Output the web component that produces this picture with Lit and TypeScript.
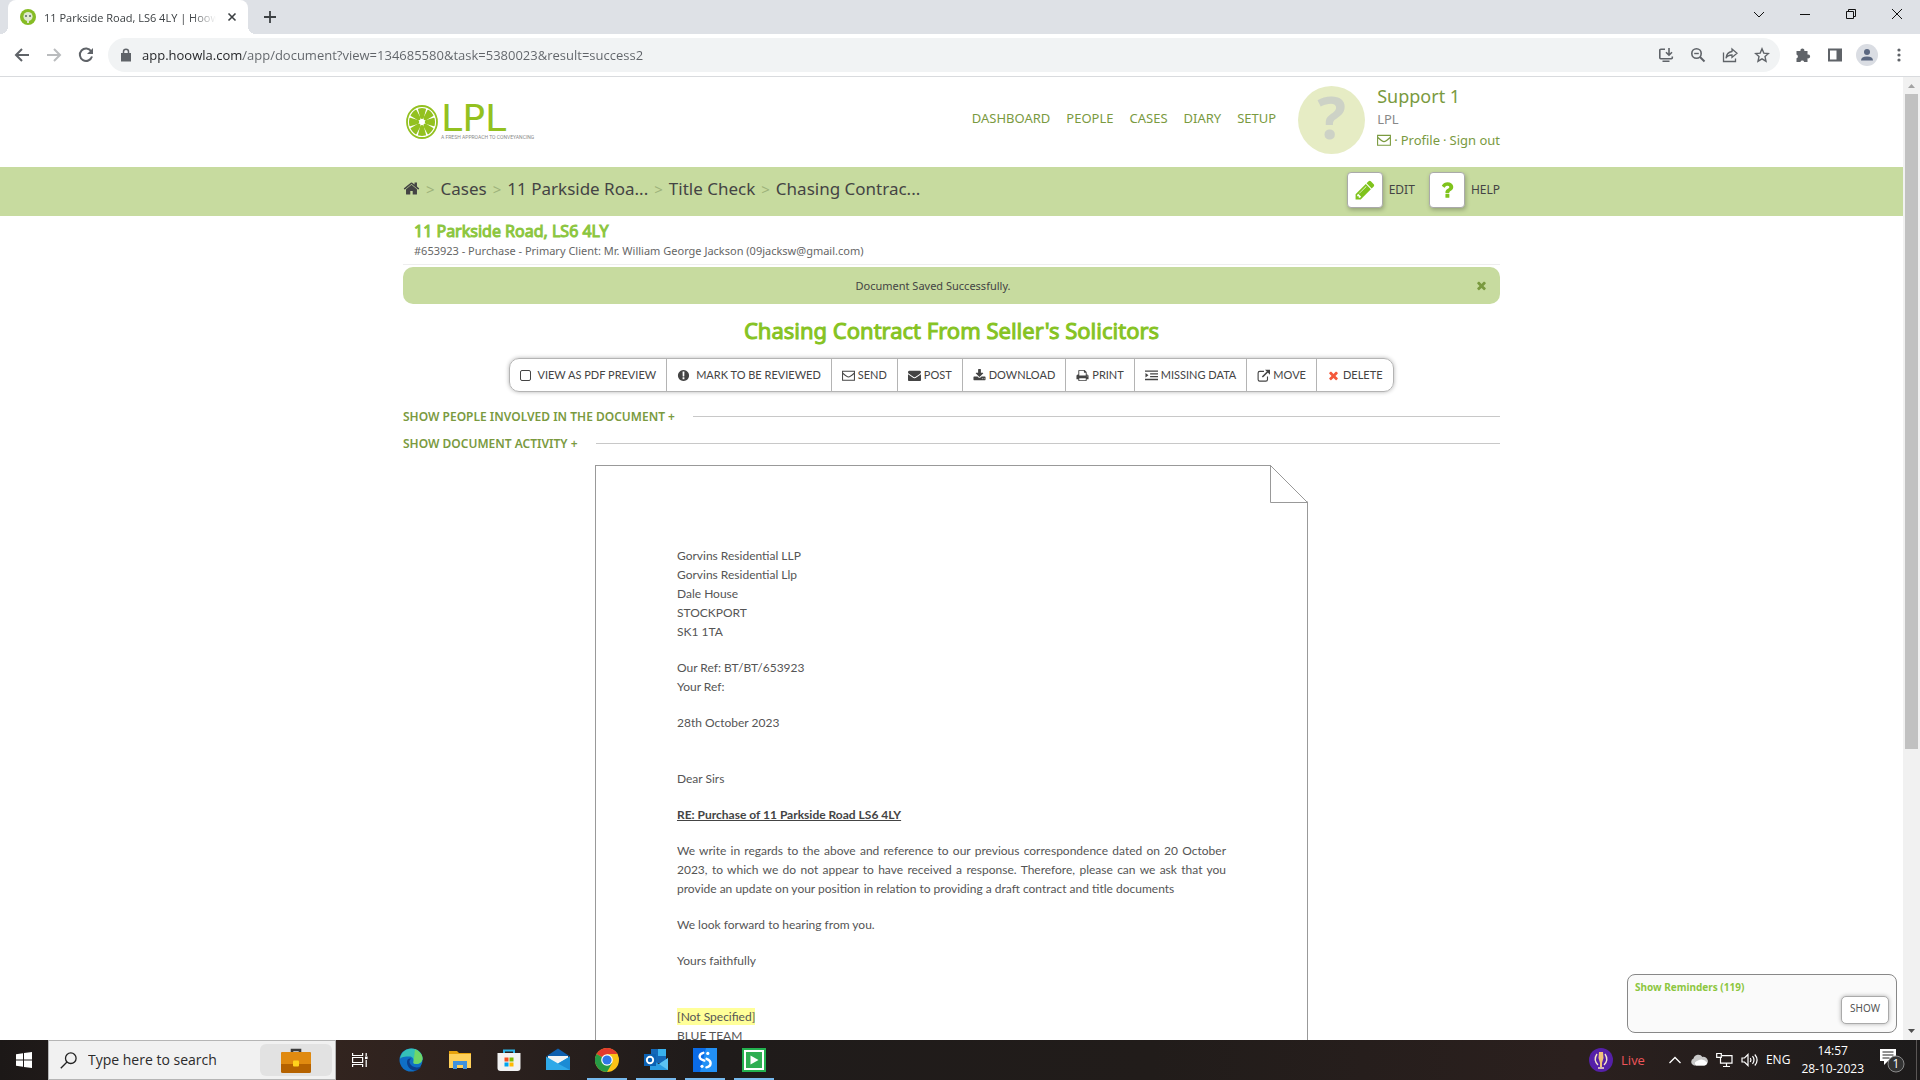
import { LitElement, html, css, svg } from "lit";
import { customElement } from "lit/decorators.js";

const FA: Record<string, string> = {
  home: "M1472 992v480q0 26-19 45t-45 19h-384v-384h-256v384h-384q-26 0-45-19t-19-45v-480q0-1 .5-3t.5-3l575-474 575 474q1 2 1 6zm223-69l-62 74q-8 9-21 11h-3q-13 0-21-7l-692-577-692 577q-12 8-24 7-13-2-21-11l-62-74q-8-10-7-23.500t11-21.500l719-599q32-26 76-26t76 26l244 204v-195q0-14 9-23t23-9h192q14 0 23 9t9 23v408l219 182q10 8 11 21.500t-7 23.500z",
  pencil:
    "M491 1536l91-91-235-235-91 91v107h128v128h107zm523-928q0-22-22-22-10 0-17 7l-542 542q-7 7-7 17 0 22 22 22 10 0 17-7l542-542q7-7 7-17zm-54-192l416 416-832 832h-416v-416zm683 96q0 53-37 90l-166 166-416-416 166-165q36-38 90-38 53 0 91 38l235 234q37 39 37 91z",
  question:
    "M1088 1256v240q0 16-12 28t-28 12h-240q-16 0-28-12t-12-28v-240q0-16 12-28t28-12h240q16 0 28 12t12 28zm316-600q0 54-15.500 101t-35 76.500-55 59.500-57.500 43.500-61 35.500q-41 23-68.500 65t-27.500 67q0 17-12 32.500t-28 15.500h-240q-15 0-25.500-18.500t-10.500-37.500v-45q0-83 65-156.500t143-108.500q59-27 84-56t25-76q0-42-46.500-74t-107.500-32q-65 0-108 29-35 25-107 115-13 16-31 16-12 0-25-8l-164-125q-13-10-15.500-25t5.500-28q160-266 464-266 80 0 161 31t146 83 106 127.500 41 158.500z",
  times:
    "M1490 1322q0 40-28 68l-136 136q-28 28-68 28t-68-28l-294-294-294 294q-28 28-68 28t-68-28l-136-136q-28-28-28-68t28-68l294-294-294-294q-28-28-28-68t28-68l136-136q28-28 68-28t68 28l294 294 294-294q28-28 68-28t68 28l136 136q28 28 28 68t-28 68l-294 294 294 294q28 28 28 68z",
  envelope:
    "M1792 710v794q0 66-47 113t-113 47h-1472q-66 0-113-47t-47-113v-794q44 49 101 87 362 246 497 345 57 42 92.500 65.500t94.500 48 110 24.500h2q51 0 110-24.500t94.500-48 92.500-65.500q170-123 498-345 57-39 100-87zm0-294q0 79-49 151t-122 123q-376 261-468 325-10 7-42.500 31t-54 38.500-52 32.500-57.500 27-50 9h-2q-23 0-50-9t-57.500-27-52-32.500-54-38.500-42.500-31q-91-64-262-182.500t-205-142.500q-62-42-117-115.500t-55-136.500q0-78 41.500-130t118.500-52h1472q65 0 112.500 47t47.500 113z",
  download:
    "M1344 1344q0-26-19-45t-45-19-45 19-19 45 19 45 45 19 45-19 19-45zm256 0q0-26-19-45t-45-19-45 19-19 45 19 45 45 19 45-19 19-45zm128-224v320q0 40-28 68t-68 28h-1472q-40 0-68-28t-28-68v-320q0-40 28-68t68-28h465l135 136q58 56 136 56t136-56l136-136h464q40 0 68 28t28 68zm-325-569q17 41-14 70l-448 448q-18 19-45 19t-45-19l-448-448q-31-29-14-70 17-39 59-39h256v-448q0-26 19-45t45-19h256q26 0 45 19t19 45v448h256q42 0 59 39z",
  print:
    "M448 1536h896v-256h-896v256zm0-640h896v-384h-160q-40 0-68-28t-28-68v-160h-640v640zm1152 64q0-26-19-45t-45-19-45 19-19 45 19 45 45 19 45-19 19-45zm128 0v416q0 13-9.500 22.500t-22.500 9.500h-224v160q0 40-28 68t-68 28h-960q-40 0-68-28t-28-68v-160h-224q-13 0-22.500-9.500t-9.500-22.500v-416q0-79 56.500-135.500t135.500-56.500h64v-544q0-40 28-68t68-28h672q40 0 88 20t76 48l152 152q28 28 48 76t20 88v256h64q79 0 135.500 56.500t56.500 135.500z",
  alert:
    "M896 128a768 768 0 1 0 .1 0zM800 352h192q32 0 31 32l-18 624q-1 30-32 30h-156q-30 0-31-30l-18-624q-1-32 32-32zm0 800h190q32 0 32 32v190q0 32-32 32h-190q-32 0-32-32v-190q0-32 32-32z",
  indent:
    "M0 192h1792v192H0zM704 576h1088v192H704zM704 960h1088v192H704zM0 1344h1792v192H0zM64 544l416 320-416 320z",
};

const fa = (name: string, cls = "") =>
  html`<svg class="fa ${cls}" viewBox="0 0 1792 1792" aria-hidden="true"><path fill-rule="evenodd" d=${FA[name]}></path></svg>`;

const mailOutline = html`<svg class="fa" viewBox="0 0 14 14" aria-hidden="true">
  <path d="M.6 2.400h12.800v9.800H.6zM.6 4.200C3 6.500 5 8.600 7 8.600s4-2.100 6.400-4.400" fill="none" stroke="currentColor" stroke-width="1.100"></path>
</svg>`;

const moveOut = html`<svg class="fa" viewBox="0 0 14 14" aria-hidden="true">
  <path d="M7.500 2.500H3A1.800 1.800 0 0 0 1.200 4.300v6.900A1.800 1.800 0 0 0 3 13h6.500a1.800 1.800 0 0 0 1.800-1.800V8" fill="none" stroke="currentColor" stroke-width="1.200"></path>
  <path d="M5.800 8.600L12 2.400" stroke="currentColor" stroke-width="1.800"></path>
  <path d="M8.600.8H14v5.400z"></path>
</svg>`;

const citrus = html`<svg class="citrus" viewBox="0 0 32 34" aria-hidden="true">
  <ellipse cx="16" cy="17" rx="15" ry="16" fill="none" stroke="#93c120" stroke-width="1.800"></ellipse>
  ${[0, 45, 90, 135, 180, 225, 270, 315].map(
    (a) => svg`<path transform="translate(16 17) scale(1 1.070) rotate(${a})" fill="#93c120" d="M1.800 -4L4 -11.800Q4 -12.600 3 -12.700Q0 -13.400 -3 -12.700Q-4 -12.600 -4 -11.800L-1.800 -4Q0 -1.500 1.800 -4z"></path>`
  )}
</svg>`;

@customElement("chrome-frame")
class ChromeFrame extends LitElement {
  static styles = css`
    :host { display: block; font-family: "Open Sans", "Noto Sans", sans-serif; color: #3c4043; }
    button { border: 0; padding: 0; background: none; color: inherit; display: grid; place-items: center; }
    svg { display: block; fill: none; stroke: #5f6368; stroke-width: 2; }
    .tabs { display: flex; height: 34px; background: #dee1e6; padding-left: 8px; }
    .tab { position: relative; display: flex; align-items: center; width: 240px; box-sizing: border-box; padding: 0 8px 0 12px; background: #fff; border-radius: 8px 8px 0 0; font-size: 12px; }
    .tab::before, .tab::after { content: ""; position: absolute; bottom: 0; width: 8px; height: 8px; }
    .tab::before { left: -8px; background: radial-gradient(circle at 0 0, #dee1e6 8px, #fff 8px); }
    .tab::after { right: -8px; background: radial-gradient(circle at 100% 0, #dee1e6 8px, #fff 8px); }
    .favicon { stroke: none; }
    .title { flex: 1; margin-left: 8px; white-space: nowrap; overflow: hidden; font-size: 11px; -webkit-mask: linear-gradient(to left, transparent, #000 24px); mask: linear-gradient(to left, transparent, #000 24px); }
    .close { width: 16px; height: 16px; margin-left: 8px; }
    .plus { width: 28px; margin-left: 8px; }
    .win { margin-left: auto; display: flex; }
    .win button { width: 46px; height: 28px; }
    .win svg { stroke: #111; stroke-width: 1; }
    .bar { display: flex; align-items: center; height: 42px; padding: 0 5px 0 6px; border-bottom: 1px solid #d9dbde; }
    .nav { display: flex; }
    .nav button { width: 32px; height: 32px; }
    .omni { flex: 1; display: flex; align-items: center; height: 34px; margin: 0 7px 0 6px; padding: 0 2px 0 12px; border-radius: 17px; background: #f1f3f4; }
    .url { flex: 1; min-width: 0; margin-left: 10px; padding: 0; border: 0; outline: 0; font: 13px/20px "Open Sans", "Noto Sans", sans-serif; color: transparent; background: linear-gradient(to right, #202124 101px, #5f6368 101px); -webkit-background-clip: text; background-clip: text; }
    .omni button, .ext button { width: 32px; height: 32px; }
    .ext { display: flex; }
    .person { width: 22px; height: 22px; border-radius: 50%; background: #dadde3; display: grid; place-items: center; }
  `;
  render() {
    return html`
      <div class="tabs">
        <div class="tab">
          <svg class="favicon" width="16" height="16" viewBox="0 0 16 16"><circle cx="8" cy="8" r="8" fill="#86bc25"></circle><circle cx="8" cy="7.500" r="4.600" fill="#dfe9cf"></circle><circle cx="6" cy="7" r="1" fill="#566"></circle><circle cx="10" cy="7" r="1" fill="#566"></circle><path d="M7 11h2v3H7z" fill="#dfe9cf"></path></svg>
          <span class="title">11 Parkside Road, LS6 4LY | Hoowla</span>
          <button class="close" aria-label="Close tab"><svg width="10" height="10" viewBox="0 0 10 10"><path d="M1.500 1.500l7 7M8.500 1.500l-7 7" stroke="#3c4043" stroke-width="1.600"></path></svg></button>
        </div>
        <button class="plus" aria-label="New tab"><svg width="14" height="14" viewBox="0 0 14 14"><path d="M7 1v12M1 7h12" stroke="#3c4043" stroke-width="1.800"></path></svg></button>
        <div class="win">
          <button aria-label="Search tabs"><svg width="12" height="12" viewBox="0 0 12 12"><path d="M1 4l5 5 5-5"></path></svg></button>
          <button aria-label="Minimize"><svg width="12" height="12" viewBox="0 0 12 12"><path d="M1 6.500h10"></path></svg></button>
          <button aria-label="Restore"><svg width="12" height="12" viewBox="0 0 12 12"><path d="M1.500 3.500h7v7h-7zM3.500 3.500v-2h7v7h-2"></path></svg></button>
          <button aria-label="Close"><svg width="12" height="12" viewBox="0 0 12 12"><path d="M1 1l10 10M11 1L1 11"></path></svg></button>
        </div>
      </div>
      <div class="bar">
        <div class="nav">
          <button aria-label="Back"><svg width="16" height="16" viewBox="0 0 16 16"><path d="M15 8H2M8 2L2 8l6 6"></path></svg></button>
          <button aria-label="Forward"><svg width="16" height="16" viewBox="0 0 16 16"><path d="M1 8h13M8 2l6 6-6 6" stroke="#babcbe"></path></svg></button>
          <button aria-label="Reload"><svg width="16" height="16" viewBox="0 0 16 16"><path d="M13.200 4.200A6.200 6.200 0 1 0 14 9.500"></path><path d="M15 1v6H9z" fill="#5f6368" stroke="none"></path></svg></button>
        </div>
        <div class="omni">
          <svg width="12" height="14" viewBox="0 0 12 14"><path d="M1 5h10v8.500H1z" fill="#5f6368" stroke="none"></path><path d="M3.500 5.500V3.700a2.500 2.500 0 0 1 5 0v1.800" stroke-width="1.500"></path></svg>
          <input class="url" aria-label="Address" value="app.hoowla.com/app/document?view=134685580&amp;task=5380023&amp;result=success2" />
          <button aria-label="Install"><svg width="16" height="16" viewBox="0 0 16 16"><path d="M7 2.200H2.800a1 1 0 0 0-1 1v7.500a1 1 0 0 0 1 1h10.500a1 1 0 0 0 1-1V9.500M4.500 14.200h7" stroke-width="1.600"></path><path d="M11 1v6.500M8 5.200l3 3 3-3" stroke-width="1.600"></path></svg></button>
          <button aria-label="Zoom"><svg width="16" height="16" viewBox="0 0 16 16"><circle cx="6.500" cy="6.500" r="4.700" stroke-width="1.600"></circle><path d="M10 10l4.500 4.500" stroke-width="2"></path><path d="M4.200 6.500h4.600" stroke-width="1.400"></path></svg></button>
          <button aria-label="Share"><svg width="16" height="16" viewBox="0 0 16 16"><path d="M1.500 5.500v9h12v-3" stroke-width="1.300"></path><path d="M10 2l5 4.200-5 4.200V8C7 8 5 9 4 11.200 4.300 7.500 6.500 5 10 4.500z" stroke-width="1.300"></path></svg></button>
          <button aria-label="Bookmark"><svg width="16" height="16" viewBox="0 0 16 16"><path d="M8 1.800l1.800 4.300 4.700.4-3.500 3.100 1 4.600L8 11.800l-4 2.400 1-4.600L1.500 6.500l4.700-.4z" stroke-width="1.400"></path></svg></button>
        </div>
        <div class="ext">
          <button aria-label="Extensions"><svg width="16" height="16" viewBox="0 0 16 16"><path d="M1.500 4h4a2 2 0 1 1 3.800 0h3.200v3.500a2 2 0 1 1 0 3.800V15H9.200a2 2 0 0 0-3.800 0H1.500v-3.700a2 2 0 0 0 0-3.800z" fill="#5f6368" stroke="none"></path></svg></button>
          <button aria-label="Side panel"><svg width="16" height="16" viewBox="0 0 16 16"><path d="M2 2.500h12v11H2z"></path><path d="M9.500 2h4.500v12H9.500z" fill="#5f6368" stroke="none"></path></svg></button>
          <button aria-label="Profile"><span class="person"><svg width="14" height="14" viewBox="0 0 14 14"><circle cx="7" cy="4" r="3" fill="#5a6780" stroke="none"></circle><path d="M1 12.500q0-4 6-4t6 4z" fill="#5a6780" stroke="none"></path></svg></span></button>
          <button aria-label="Menu"><svg width="4" height="16" viewBox="0 0 4 16"><g fill="#5f6368" stroke="none"><circle cx="2" cy="3" r="1.600"></circle><circle cx="2" cy="8" r="1.600"></circle><circle cx="2" cy="13" r="1.600"></circle></g></svg></button>
        </div>
      </div>`;
  }
}

const actions = [
  { label: "MARK TO BE REVIEWED", icon: fa("alert"), wide: true },
  { label: "SEND", icon: mailOutline },
  { label: "POST", icon: fa("envelope") },
  { label: "DOWNLOAD", icon: fa("download") },
  { label: "PRINT", icon: fa("print") },
  { label: "MISSING DATA", icon: fa("indent") },
  { label: "MOVE", icon: moveOut },
  { label: "DELETE", icon: fa("times", "red") },
];

@customElement("case-page")
class CasePage extends LitElement {
  static styles = css`
    :host { display: block; font-family: "Noto Sans", "Open Sans", sans-serif; color: #444; background: #fff; }
    a { color: inherit; text-decoration: none; }
    button { font: inherit; color: inherit; background: none; border: 0; padding: 0; }
    h1, h2, h3, p { margin: 0; }
    .fa { display: block; width: 14px; height: 14px; fill: currentColor; flex: none; }
    .wrap { max-width: 1097px; margin: 0 auto; }
    .head { display: flex; align-items: center; height: 90px; }
    .logo { display: flex; align-items: center; gap: 3px; padding-left: 3px; color: #93c120; }
    .citrus { width: 32px; height: 34px; }
    .brand { display: flex; flex-direction: column; gap: 2px; }
    .name { font: 38px/28px "DejaVu Sans", sans-serif; }
    .tag { font: 5px/6px "Roboto", sans-serif; color: #8a8a8a; white-space: nowrap; }
    .menu { display: flex; gap: 16px; margin-left: auto; padding-bottom: 8px; font-size: 13px; line-height: 18px; color: #7a9a3f; }
    .avatar { box-sizing: border-box; width: 67px; height: 68px; margin: 0 12px 4px 22px; padding-bottom: 8px; border-radius: 50%; background: #e6ecc4; color: #cdd2c6; display: grid; place-items: center; font-size: 60px; line-height: 60px; font-weight: 700; }
    .user { display: grid; gap: 4px; padding-bottom: 10px; color: #7a9a3f; font-size: 13px; line-height: 18px; }
    .user .who { font-size: 18px; line-height: 22px; }
    .user .firm { color: #888; line-height: 16px; }
    .user .links { display: flex; align-items: center; gap: 3px; }
    .crumbs { background: #c7db9f; }
    .crumbs .wrap { display: flex; align-items: center; height: 49px; }
    .trail { display: flex; align-items: center; gap: 6px; font-size: 17px; line-height: 24px; padding-bottom: 6px; }
    .trail .fa { width: 17px; height: 17px; }
    .sep { color: #9db27a; font-size: 15px; }
    .tools { display: flex; gap: 14px; margin-left: auto; padding-bottom: 4px; }
    .tool { display: flex; align-items: center; gap: 6px; font-size: 12px; }
    .box { width: 34px; height: 34px; border: 1px solid #aaa; border-radius: 4px; background: #fff; box-shadow: 1px 2px 4px rgba(0, 0, 0, 0.25); display: grid; place-items: center; color: #7fc31c; }
    .box .fa { width: 22px; height: 22px; }
    .case { padding: 4px 11px; border-bottom: 1px solid #eee; }
    .case h1 { font-size: 16px; line-height: 22px; font-weight: 400; color: #8cc63f; -webkit-text-stroke: 1px #8cc63f; }
    .case p { font-size: 11px; line-height: 18px; color: #666; }
    .alert { display: flex; align-items: center; height: 37px; margin-top: 2px; padding: 0 12px; border-radius: 10px; background: #c7db9f; font-size: 11px; }
    .alert span { flex: 1; padding-right: 24px; text-align: center; }
    .alert .fa { width: 13px; height: 13px; color: #7a9a3f; }
    h2 { margin-top: 10px; text-align: center; font-size: 22px; line-height: 32px; font-weight: 400; color: #86c323; -webkit-text-stroke: 1px #86c323; }
    .actions { display: flex; width: max-content; margin: 12px auto 0; border: 1px solid #b4b4b4; border-radius: 10px; box-shadow: 0 0 4px rgba(0, 0, 0, 0.3); font: 11px/32px "Lato", sans-serif; }
    .act { display: flex; align-items: center; gap: 3px; padding: 0 10px; line-height: 32px; }
    .act.wide { gap: 6px; }
    .act + .act { border-left: 1px solid #b4b4b4; }
    .act input { appearance: none; width: 11px; height: 11px; margin: 0; border: 1px solid #444; border-radius: 2px; background: #fff; }
    .act .fa { width: 13px; height: 13px; }
    .red { color: #f4593b; }
    .reveal { display: flex; align-items: center; gap: 18px; color: #7a9a3f; font-size: 12px; line-height: 27px; font-weight: 600; }
    .reveal::after { content: ""; flex: 1; height: 1px; background: #c8c8c8; }
    .reveals { margin-top: 11px; }
    .paper { position: relative; box-sizing: border-box; width: 65%; margin: 8px auto 0; padding: 81px 81px 60px; border: 1px solid #999; border-top: 0; font: 12px/19px "Lato", sans-serif; color: #555; text-align: justify; }
    .paper::before { content: ""; position: absolute; left: 0; right: 37px; top: 0; height: 1px; background: #999; }
    .fold { position: absolute; right: -1px; top: 0; display: block; }
    .paper p + p { margin-top: 17px; }
    .paper p.far { margin-top: 37px; }
    mark { background: #ffff99; color: inherit; display: inline-block; line-height: 17px; }
    b { font-weight: 700; text-decoration: underline; color: #444; }
  `;
  render() {
    const sep = html`<span class="sep">&gt;</span>`;
    return html`
      <header class="wrap head">
        <a class="logo" href="#">${citrus}<span class="brand"><span class="name">LPL</span><span class="tag">A FRESH APPROACH TO CONVEYANCING</span></span></a>
        <nav class="menu">${["DASHBOARD", "PEOPLE", "CASES", "DIARY", "SETUP"].map((t) => html`<a href="#">${t}</a>`)}</nav>
        <span class="avatar">?</span>
        <div class="user">
          <a class="who" href="#">Support 1</a>
          <span class="firm">LPL</span>
          <span class="links"><a href="#" aria-label="Messages">${mailOutline}</a>·<a href="#">Profile</a>·<a href="#">Sign out</a></span>
        </div>
      </header>
      <div class="crumbs">
        <div class="wrap">
          <nav class="trail">
            <a href="#" aria-label="Home">${fa("home")}</a>
            ${["Cases", "11 Parkside Roa...", "Title Check", "Chasing Contrac..."].map((t) => html`${sep}<a href="#">${t}</a>`)}
          </nav>
          <div class="tools">
            <button class="tool"><span class="box">${fa("pencil")}</span>EDIT</button>
            <button class="tool"><span class="box">${fa("question")}</span>HELP</button>
          </div>
        </div>
      </div>
      <main class="wrap">
        <div class="case">
          <h1>11 Parkside Road, LS6 4LY</h1>
          <p>#653923 - Purchase - Primary Client: Mr. William George Jackson (09jacksw@gmail.com)</p>
        </div>
        <div class="alert" role="status"><span>Document Saved Successfully.</span><button aria-label="Dismiss">${fa("times")}</button></div>
        <h2>Chasing Contract From Seller's Solicitors</h2>
        <div class="actions">
          <label class="act wide"><input type="checkbox" />VIEW AS PDF PREVIEW</label>
          ${actions.map((a) => html`<button class="act ${a.wide ? "wide" : ""}">${a.icon}${a.label}</button>`)}
        </div>
        <div class="reveals">
          <div class="reveal"><button>SHOW PEOPLE INVOLVED IN THE DOCUMENT +</button></div>
          <div class="reveal"><button>SHOW DOCUMENT ACTIVITY +</button></div>
        </div>
        <article class="paper">
          <svg class="fold" width="38" height="38" viewBox="0 0 38 38"><path d="M.5 0v37.500H38M.5.500L37.500 37.500" fill="none" stroke="#999"></path><path d="M1.500 0H38v37z" fill="#fff"></path><path d="M.5.500L37.500 37.500" stroke="#999"></path></svg>
          <p>Gorvins Residential LLP<br />Gorvins Residential Llp<br />Dale House<br />STOCKPORT<br />SK1 1TA</p>
          <p>Our Ref: BT/BT/653923<br />Your Ref:</p>
          <p>28th October 2023</p>
          <p class="far">Dear Sirs</p>
          <p><b>RE: Purchase of 11 Parkside Road LS6 4LY</b></p>
          <p>We write in regards to the above and reference to our previous correspondence dated on 20 October 2023, to which we do not appear to have received a response. Therefore, please can we ask that you provide an update on your position in relation to providing a draft contract and title documents</p>
          <p>We look forward to hearing from you.</p>
          <p>Yours faithfully</p>
          <p class="far"><mark>[Not Specified]</mark><br />BLUE TEAM</p>
        </article>
      </main>`;
  }
}

const appIcons = [
  { name: "Edge", open: false, art: svg`<circle cx="12" cy="12" r="11.500" fill="#0f6fc5"></circle><path d="M1 11C2 4 7 .5 12.500.5 19 .5 24 5.500 23.500 11c-.3 3-3 5-6.500 5-2 0-3-.8-2.500-2 .8-3-1-5.500-4-5.500C6 8.500 2 9 1 11z" fill="#35c1b8"></path><path d="M16 1.500c5 2 7.800 6 7.500 9.500-.3 3-3 5-6.500 5-2 0-3-.8-2.500-2z" fill="#6fd768"></path><path d="M8 14c0 5 4 9 9 8.500 2-.5 4-2 5.200-4-5 2-10 .5-11.500-3.500-.7-2 .3-4 1.800-4.500C9 10 8 12 8 14z" fill="#0b3f8c"></path>` },
  { name: "File Explorer", open: false, art: svg`<path d="M1 3h8l2 2h12v3H1z" fill="#e8a20c"></path><path d="M1 6h22v14H1z" fill="#ffd05a"></path><path d="M5 21v-8h14v8h-4v-4H9v4z" fill="#3f91dd"></path>` },
  { name: "Store", open: false, art: svg`<path d="M7 6V2.500h10V6" fill="none" stroke="#2bb5ea" stroke-width="2"></path><path d="M.5 5h23v15q0 3-3 3h-17q-3 0-3-3z" fill="#f2f2f2"></path><path d="M7.500 9.500h4v4h-4z" fill="#f25022"></path><path d="M12.500 9.500h4v4h-4z" fill="#7fba00"></path><path d="M7.500 14.500h4v4h-4z" fill="#00a4ef"></path><path d="M12.500 14.500h4v4h-4z" fill="#ffb900"></path>` },
  { name: "Mail", open: false, art: svg`<path d="M0 8.500L12 .5l12 8z" fill="#0f5fae"></path><path d="M2 8h20v10H2z" fill="#f4f4f4"></path><path d="M0 8.500l12 7 12-7V22H0z" fill="#2fa9e8"></path><path d="M24 8.500V22L12 15.500z" fill="#1b8bd4"></path>` },
  { name: "Chrome", open: true, art: svg`<circle cx="12" cy="12" r="12" fill="#fbc116"></circle><path d="M12 12L1.600 6A12 12 0 0 1 22.400 6H12z" fill="#e33b2e"></path><path d="M12 12L1.600 6A12 12 0 0 0 12 24l5.200-9z" fill="#269a45"></path><path d="M12 6.500h10.700L17 15z" fill="#fbc116"></path><circle cx="12" cy="12" r="5.800" fill="#fff"></circle><circle cx="12" cy="12" r="4.600" fill="#2f78e8"></circle>` },
  { name: "Outlook", open: true, art: svg`<path d="M7 1h15v14H7z" fill="#1468b8"></path><path d="M14 1h8v7h-8z" fill="#38b1ee"></path><path d="M6 22V11l9 5 9-6v12z" fill="#2b9de2"></path><path d="M24 10v12l-9-6z" fill="#5cc4f4"></path><path d="M0 6h12v12H0z" fill="#0b62b4"></path><circle cx="6" cy="12" r="3.200" fill="none" stroke="#fff" stroke-width="1.900"></circle>` },
  { name: "Sync", open: true, art: svg`<path d="M0 0h24v24H0z" fill="#0a6be6"></path><path d="M13 0h11v24H7z" fill="#2290f5"></path><path d="M10.300 4.800Q6.600 5.600 6.600 8.600Q6.600 11.400 11.300 12.600M13.600 10.800Q17.600 12.200 17.600 15.200Q17.600 18.400 13.400 19.300" fill="none" stroke="#fff" stroke-width="2.400" stroke-linecap="round"></path><circle cx="14.800" cy="5.400" r="1.600" fill="#fff"></circle><circle cx="9" cy="18.300" r="1.600" fill="#fff"></circle>` },
  { name: "Player", open: true, art: svg`<path d="M0 0h24v24H0z" fill="#23b14f"></path><path d="M3 3h18v18H3z" fill="#2fae52" stroke="#fff" stroke-width="2"></path><path d="M8.500 7.500l8 4.500-8 4.500z" fill="#fff"></path>` },
];

@customElement("task-bar")
class TaskBar extends LitElement {
  static styles = css`
    :host { display: flex; height: 40px; background: linear-gradient(to right, #1c1817, #32241f 330px, #2c211e 480px, #1f1b1a 700px, #211c1a 60%, #2b201e 82%, #1d1b1b); color: #fff; font: 12px/18px "Open Sans", "Noto Sans", sans-serif; }
    button { border: 0; padding: 0; background: none; color: inherit; font: inherit; display: grid; place-items: center; }
    svg { display: block; }
    .start { width: 48px; }
    .search { display: flex; align-items: center; box-sizing: border-box; width: 288px; padding: 0 3px 0 11px; border: 1px solid #b5b5b5; background: #f1f1f1; }
    .search input { flex: 1; min-width: 0; border: 0; padding: 0; margin-left: 11px; background: none; outline: 0; font: 14px/20px "Open Sans", "Noto Sans", sans-serif; }
    .search input::placeholder { color: #2b2b2b; opacity: 1; }
    .case { width: 72px; height: 32px; border-radius: 6px; background: #e2e2e2; display: grid; place-items: center; }
    .view { width: 48px; }
    .apps { display: flex; gap: 9px; padding-left: 7px; }
    .app { width: 40px; height: 40px; box-sizing: border-box; border-bottom: 2px solid transparent; padding-top: 1px; }
    .app.open { border-color: #76b9ed; }
    .tray { display: flex; align-items: center; margin-left: auto; }
    .live { display: flex; align-items: center; gap: 8px; font-size: 13px; color: #f0555a; margin-right: 23px; }
    .icons { display: flex; align-items: center; gap: 8px; }
    .clock { display: grid; justify-items: center; margin: 0 15px 0 11px; }
    .note { margin-right: 11px; }
    .peek { width: 4px; height: 40px; box-sizing: border-box; border-left: 1px solid #5a5655; }
  `;
  render() {
    return html`
      <button class="start" aria-label="Start"><svg width="16" height="16" viewBox="0 0 16 16" fill="#fff"><path d="M0 2.200L7 1.200v6.300H0zM8 1l8-1v7.500H8zM0 8.500h7v6.300l-7-1zM8 8.500h8V16l-8-1.100z"></path></svg></button>
      <label class="search">
        <svg width="17" height="17" viewBox="0 0 17 17" fill="none" stroke="#222" stroke-width="1.300"><circle cx="10.800" cy="6.200" r="5.300"></circle><path d="M7 10L.8 16.200"></path></svg>
        <input type="text" aria-label="Search" placeholder="Type here to search" />
        <span class="case"><svg width="30" height="25" viewBox="0 0 30 25"><path d="M11 4V2h8v2" fill="none" stroke="#3a3a3a" stroke-width="2.600"></path><rect y="4" width="30" height="21" rx="1.500" fill="#b56200"></rect><path d="M0 5.500Q0 4 1.500 4h27Q30 4 30 5.500V16H0z" fill="#e08a10"></path><rect x="12" y="12.500" width="6" height="6" rx="1" fill="#ffd21c"></rect></svg></span>
      </label>
      <button class="view" aria-label="Task view"><svg width="16" height="16" viewBox="0 0 16 16" fill="none" stroke="#fff" stroke-width="1.200"><path d="M.6 1v2.500h10V1M.6 5.500h10v5H.6zM.6 15v-2.500h10V15M14.200 1v3M14.200 8v7"></path><path d="M13 4.500h2.600v2.600H13z" fill="#fff" stroke="none"></path></svg></button>
      <div class="apps">
        ${appIcons.map((a) => html`<button class="app ${a.open ? "open" : ""}" aria-label=${a.name}><svg width="24" height="24" viewBox="0 0 24 24">${a.art}</svg></button>`)}
      </div>
      <div class="tray">
        <button class="live"><svg width="24" height="24" viewBox="0 0 24 24"><circle cx="12" cy="12" r="12" fill="#5520a8"></circle><path d="M10 4h4l.5 6-1.500 5v4h-2v-4L9.500 10z" fill="#f0c27a"></path><path d="M8 6q-4 6 1 11M16 6q4 6-1 11M9 20h6" fill="none" stroke="#f6e3c8" stroke-width="1.400"></path></svg>Live</button>
        <div class="icons">
          <svg width="14" height="14" viewBox="0 0 14 14"><path d="M1.500 10L7 4.500l5.500 5.500" fill="none" stroke="#fff" stroke-width="1.300"></path></svg>
          <svg width="18" height="14" viewBox="0 0 18 14"><path d="M4 12.500a3.700 3.700 0 0 1-.5-7A5 5 0 0 1 12.500 4a4 4 0 0 1 2 8.500z" fill="#c9c9c9"></path><path d="M6 12.500q-3-3.500 2-5 5-2.500 9 2 0 3-3 3z" fill="#fff"></path></svg>
          <svg width="17" height="16" viewBox="0 0 17 16" fill="none" stroke="#fff" stroke-width="1.200"><path d="M6 3.600h10v7.500H4.500V6M10.500 11v3M7 14.500h7"></path><path d="M.7 1.500h4.600v3.800H.7z"></path></svg>
          <svg width="17" height="16" viewBox="0 0 17 16" fill="none" stroke="#fff" stroke-width="1.200"><path d="M1 6h2.500L7 2.500v11L3.500 10H1z"></path><path d="M9.200 6q1.400 2 0 4M11.500 4.200q3 3.800 0 7.600M13.800 2.500q4.600 5.500 0 11"></path></svg>
          <span>ENG</span>
        </div>
        <div class="clock"><span>14:57</span><span>28-10-2023</span></div>
        <button class="note" aria-label="Notifications"><svg width="26" height="26" viewBox="0 0 26 26"><path d="M1 2h16v12H9l-4 4v-4H1z" fill="#fff"></path><path d="M3.500 5h11M3.500 8h11M3.500 11h7" stroke="#222"></path><circle cx="17" cy="17" r="8" fill="#333" stroke="#8a8a8a"></circle><text x="17" y="21" text-anchor="middle" font-size="12" fill="#fff" font-family="Open Sans, sans-serif">1</text></svg></button>
        <span class="peek"></span>
      </div>`;
  }
}

@customElement("app-root")
class AppRoot extends LitElement {
  static styles = css`
    :host { display: grid; grid-template-rows: auto minmax(0, 1fr) auto; height: 100vh; background: #fff; }
    .view { position: relative; display: flex; overflow: hidden; }
    case-page { flex: 1; min-width: 0; }
    .scroll { display: flex; flex-direction: column; align-items: center; width: 17px; background: #f1f1f1; }
    .arrow { width: 17px; height: 17px; flex: none; }
    .thumb { width: 13px; height: 68%; background: #c1c1c1; }
    .scroll .arrow:last-child { margin-top: auto; }
    .reminders { position: absolute; right: 23px; bottom: 7px; box-sizing: border-box; width: 270px; height: 59px; padding: 3px 7px; border: 1px solid #888; border-radius: 8px; background: #fafafa; display: flex; flex-direction: column; font-family: "Noto Sans", "Open Sans", sans-serif; }
    .reminders strong { font-size: 10px; line-height: 18px; font-weight: 700; color: #8cc63f; }
    .reminders button { align-self: flex-end; width: 48px; height: 28px; border: 1px solid #aaa; border-radius: 5px; background: #fff; box-shadow: 0 0 4px rgba(0, 0, 0, 0.3); padding: 0 0 4px; font: 10px/16px "Noto Sans", sans-serif; color: #555; }
  `;
  render() {
    return html`
      <chrome-frame></chrome-frame>
      <div class="view">
        <case-page></case-page>
        <div class="scroll" aria-hidden="true">
          <svg class="arrow" viewBox="0 0 17 17"><path d="M5 11l3.500-4 3.500 4z" fill="#a3a3a3"></path></svg>
          <div class="thumb"></div>
          <svg class="arrow" viewBox="0 0 17 17"><path d="M5 6l3.500 4L12 6z" fill="#505050"></path></svg>
        </div>
        <aside class="reminders"><strong>Show Reminders (119)</strong><button>SHOW</button></aside>
      </div>
      <task-bar></task-bar>`;
  }
}
